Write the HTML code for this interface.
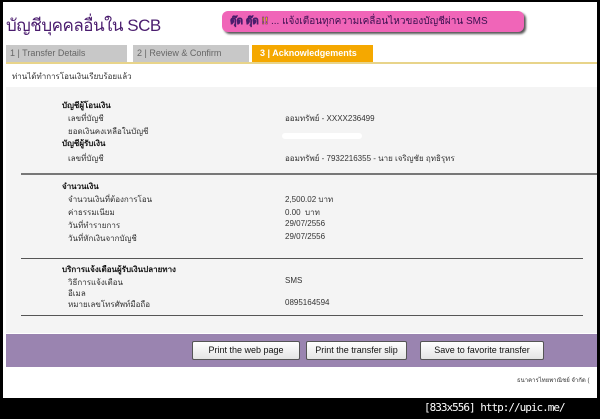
<!DOCTYPE html>
<html><head><meta charset="utf-8"><style>
*{margin:0;padding:0;box-sizing:border-box}
body{width:600px;height:419px;background:#000;position:relative;overflow:hidden;font-family:"Liberation Sans","Noto Sans CJK SC",sans-serif;}
#pg{position:absolute;left:3px;top:2px;width:594px;height:396px;background:#fff;overflow:hidden}
.a{position:absolute;white-space:nowrap}
.s{font-size:8px;color:#333}
.b{font-size:8px;font-weight:bold;color:#111}
.l{position:absolute;height:1px;background:#555}
.btn{position:absolute;top:7px;height:19px;background:linear-gradient(#fff,#e4e4e4);border:1px solid #555;border-radius:2px;font-size:9px;color:#111;text-align:center;line-height:17px}
</style></head><body>
<div id="pg">
<div class="a" style="left:3px;top:10px;font-size:17px;color:#4a1c6e;letter-spacing:-0.5px">บัญชีบุคคลอื่นใน SCB</div>
<div class="a" style="left:219px;top:9px;width:302px;height:21px;background:#f065b8;border-radius:6px;box-shadow:2px 2px 2px #555;font-size:10px;color:#3a1050;line-height:21px;padding-left:8px"><b style="color:#ffd800;-webkit-text-stroke:0.5px #4a1c6e">ตุ๊ด ตุ๊ด !!</b> ... แจ้งเตือนทุกความเคลื่อนไหวของบัญชีผ่าน SMS</div>
<div class="a" style="left:3px;top:43px;width:121px;height:17px;background:#c8c8c8;font-size:9px;color:#666;line-height:17px;padding-left:4px">1 | Transfer Details</div>
<div class="a" style="left:130px;top:43px;width:116px;height:17px;background:#c8c8c8;font-size:9px;color:#666;line-height:17px;padding-left:4px">2 | Review &amp; Confirm</div>
<div class="a" style="left:249px;top:43px;width:121px;height:17px;background:#f5a800;font-size:9px;font-weight:bold;color:#fff;line-height:17px;padding-left:8px">3 | Acknowledgements</div>
<div class="l" style="left:3px;top:60px;width:591px;height:2px;background:#e8d48a"></div>
<div class="a s" style="left:9px;top:68px">ท่านได้ทำการโอนเงินเรียบร้อยแล้ว</div>
<div class="a" style="left:3px;top:85px;width:591px;height:246px;background:#f4f4f4"></div>
<div class="a b" style="left:59px;top:97px">บัญชีผู้โอนเงิน</div>
<div class="a s" style="left:65px;top:110px">เลขที่บัญชี</div>
<div class="a s" style="left:282px;top:110px">ออมทรัพย์ - XXXX236499</div>
<div class="a s" style="left:65px;top:123px">ยอดเงินคงเหลือในบัญชี</div>
<div class="a" style="left:279px;top:131px;width:80px;height:6px;background:#fff;border-radius:3px"></div>
<div class="a b" style="left:59px;top:135px">บัญชีผู้รับเงิน</div>
<div class="a s" style="left:65px;top:150px">เลขที่บัญชี</div>
<div class="a s" style="left:282px;top:150px">ออมทรัพย์ - 7932216355 - นาย เจริญชัย ฤทธิรุทร</div>
<div class="l" style="left:18px;top:171px;width:576px;height:2px;background:#777"></div>
<div class="a b" style="left:59px;top:178px">จำนวนเงิน</div>
<div class="a s" style="left:65px;top:191px">จำนวนเงินที่ต้องการโอน</div>
<div class="a s" style="left:282px;top:191px">2,500.02 บาท</div>
<div class="a s" style="left:65px;top:204px">ค่าธรรมเนียม</div>
<div class="a s" style="left:282px;top:204px">0.00 &nbsp;บาท</div>
<div class="a s" style="left:65px;top:217px">วันที่ทำรายการ</div>
<div class="a s" style="left:282px;top:217px">29/07/2556</div>
<div class="a s" style="left:65px;top:230px">วันที่หักเงินจากบัญชี</div>
<div class="a s" style="left:282px;top:230px">29/07/2556</div>
<div class="l" style="left:18px;top:256px;width:562px"></div>
<div class="a b" style="left:59px;top:261px">บริการแจ้งเตือนผู้รับเงินปลายทาง</div>
<div class="a s" style="left:65px;top:274px">วิธีการแจ้งเตือน</div>
<div class="a s" style="left:282px;top:274px">SMS</div>
<div class="a s" style="left:65px;top:285px">อีเมล</div>
<div class="a s" style="left:65px;top:296px">หมายเลขโทรศัพท์มือถือ</div>
<div class="a s" style="left:282px;top:296px">0895164594</div>
<div class="l" style="left:18px;top:313px;width:562px"></div>
<div class="a" style="left:3px;top:332px;width:591px;height:33px;background:#9a84b0">
<div class="btn" style="left:186px;width:108px">Print the web page</div>
<div class="btn" style="left:300px;width:101px">Print the transfer slip</div>
<div class="btn" style="left:414px;width:124px">Save to favorite transfer</div>
</div>
<div class="a" style="left:514px;top:373px;font-size:6px;color:#333">ธนาคารไทยพาณิชย์ จำกัด (</div>
</div>
<div class="a" style="left:424px;top:401px;font-size:11px;color:#fff;font-family:'DejaVu Sans Mono',monospace;letter-spacing:-1px">[833x556] http://upic.me/</div>
</body></html>
